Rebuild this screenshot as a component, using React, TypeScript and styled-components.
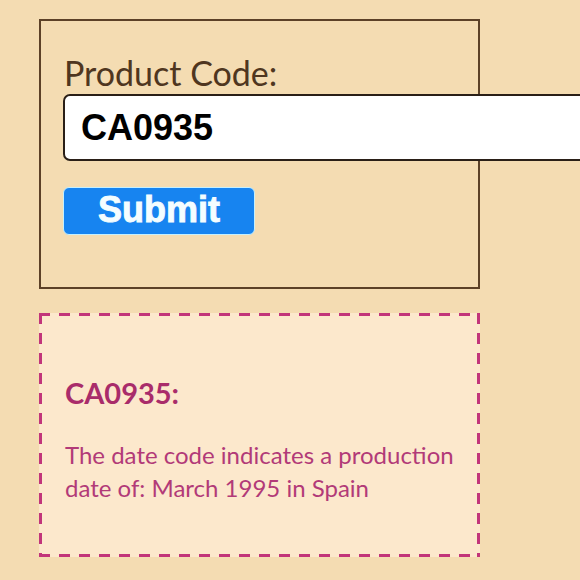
import React from "react";
import styled, { createGlobalStyle } from "styled-components";

const Global = createGlobalStyle`
  html, body { margin: 0; padding: 0; }
  body {
    background: #f4dcb2;
    width: 580px;
    height: 580px;
    overflow: hidden;
  }
`;

const Page = styled.div`
  width: 580px;
  height: 580px;
  box-sizing: border-box;
  padding: 19px 0 0 39px;
  display: flex;
  flex-direction: column;
  gap: 24px;
  background: #f4dcb2;
  overflow: hidden;
`;

const FormBox = styled.form`
  box-sizing: border-box;
  width: 441px;
  height: 270px;
  border: 2px solid #5c4127;
  padding: 32px 0 0 22px;
  display: flex;
  flex-direction: column;
  align-items: flex-start;
`;

const Label = styled.label`
  font-family: "Lato", sans-serif;
  font-size: 34px;
  color: #4f3620;
  line-height: 40px;
  margin-left: 1px;
`;

const Input = styled.input`
  box-sizing: border-box;
  width: 535px;
  flex-shrink: 0;
  height: 67px;
  margin-top: 1px;
  border: 2px solid #2a1f17;
  border-radius: 7px;
  background: #ffffff;
  padding: 0 0 0 16px;
  font-family: "Liberation Sans", Arial, sans-serif;
  font-weight: bold;
  font-size: 36px;
  color: #000;
  outline: none;
`;

const Button = styled.button`
  box-sizing: border-box;
  margin-top: 26px;
  width: 192px;
  height: 48px;
  border: 1.5px solid #c4f0ff;
  border-radius: 6px;
  background: #1784f0;
  color: #f4fdff;
  font-family: "Liberation Sans", Arial, sans-serif;
  font-weight: bold;
  font-size: 36px;
  -webkit-text-stroke: 0.9px #f4fdff;
  line-height: 1;
  padding: 0 0 2px;
  cursor: pointer;
`;

const dash = "#c2357a";

const ResultBox = styled.section`
  box-sizing: border-box;
  width: 441px;
  height: 244px;
  background:
    repeating-linear-gradient(90deg, ${dash} 0 11px, transparent 11px 20px) top left / 100% 3px no-repeat,
    repeating-linear-gradient(90deg, ${dash} 0 11px, transparent 11px 20px) bottom left / 100% 3px no-repeat,
    repeating-linear-gradient(180deg, ${dash} 0 11px, transparent 11px 20px) top left / 3px 100% no-repeat,
    repeating-linear-gradient(180deg, ${dash} 0 11px, transparent 11px 20px) top right / 3px 100% no-repeat,
    #fce8cc;
  padding: 63px 0 0 26px;
  color: #b0306e;
  font-family: "Lato", sans-serif;
`;

const ResultTitle = styled.h2`
  margin: 0;
  font-size: 29px;
  font-weight: bold;
  line-height: 34px;
  color: #a92c6a;
`;

const ResultText = styled.p`
  margin: 28px 0 0;
  font-size: 24px;
  line-height: 33px;
  width: 410px;
  color: #b23a78;
`;

export default function App() {
  return (
    <>
      <Global />
      <Page>
        <FormBox onSubmit={(e) => e.preventDefault()}>
          <Label htmlFor="code">Product Code:</Label>
          <Input id="code" defaultValue="CA0935" />
          <Button type="submit">Submit</Button>
        </FormBox>
        <ResultBox>
          <ResultTitle>CA0935:</ResultTitle>
          <ResultText>
            The date code indicates a production date of: March 1995 in Spain
          </ResultText>
        </ResultBox>
      </Page>
    </>
  );
}
